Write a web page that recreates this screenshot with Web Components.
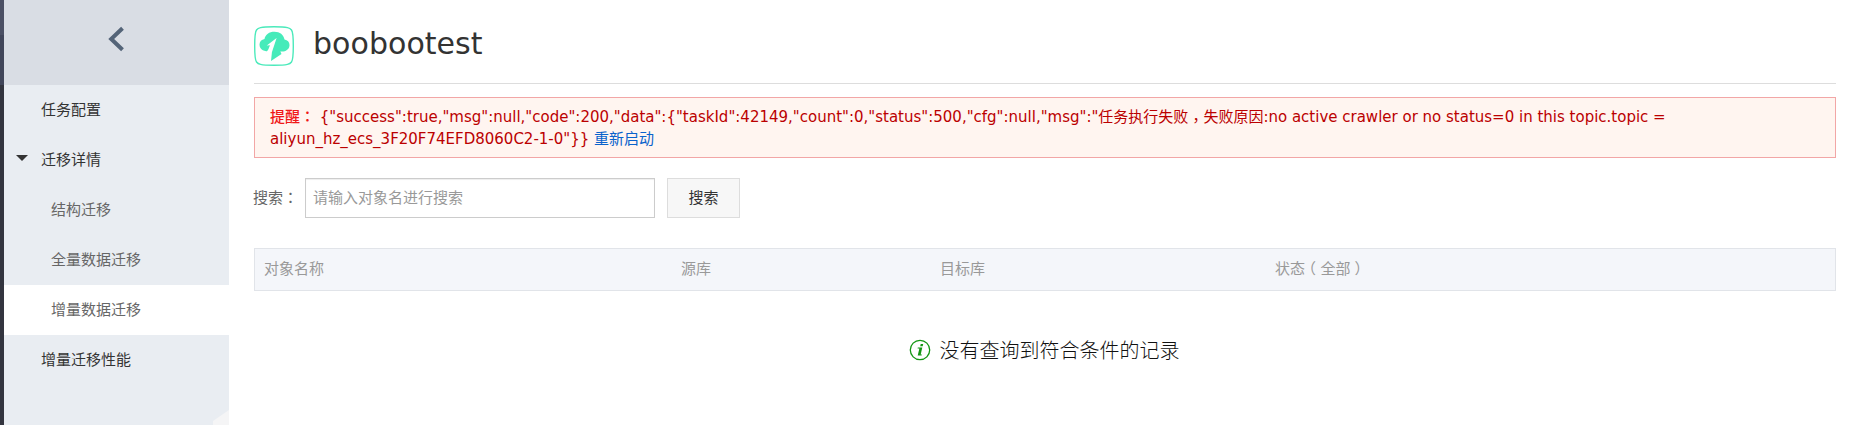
<!DOCTYPE html>
<html lang="zh-CN"><head><meta charset="utf-8"><title>boobootest</title>
<style>
html,body{margin:0;height:100%}
body{background:#fff;font-family:"DejaVu Sans","Noto Sans CJK SC",sans-serif;font-size:15px;color:#333;overflow:hidden}
</style></head><body>
<migration-app></migration-app>
<script>
const define=(name,html)=>customElements.define(name,class extends HTMLElement{
  constructor(){super();const t=document.createElement('template');t.innerHTML=html;
    this.attachShadow({mode:'open'}).append(t.content.cloneNode(true));}
});
define('nav-item',`<style>
:host{display:flex;align-items:center;height:50px;box-sizing:border-box;padding:0 0 1px 14px;color:#333;font-size:15px}
:host([sub]){color:#666}
:host([active]){background:#fff}
svg{width:12px;height:6px;margin:0 13px 4px -2px;visibility:hidden}
:host([open]) svg{visibility:visible}
:host([sub]) svg{margin-right:23px}
span{line-height:22px}
</style><svg viewBox="0 0 12 6"><path d="M0 0h12L6 6z" fill="#333"/></svg><span><slot></slot></span>`);
define('side-nav',`<style>
:host{display:flex;width:229px;height:425px;flex:none;position:relative}
.rail{width:4px;background:linear-gradient(#4b5064 35px,#41465a 35px 85px,#33353f 85px)}
.menu{flex:1;background:#e9edf2}
.back{height:85px;background:#d9dde4;display:flex;box-sizing:border-box;padding:26px 0 0 104px}
.corner{position:absolute;right:0;bottom:0;width:16px;height:15px}
svg{display:block}
</style><div class="rail"></div><div class="menu"><div class="back"><svg width="17" height="26" viewBox="0 0 17 26"><path d="M14.500 2.200L3.200 13l11.300 10.800" fill="none" stroke="#546478" stroke-width="4"/></svg></div>
<nav><nav-item>任务配置</nav-item><nav-item open>迁移详情</nav-item><nav-item sub>结构迁移</nav-item><nav-item sub>全量数据迁移</nav-item><nav-item sub active>增量数据迁移</nav-item><nav-item>增量迁移性能</nav-item></nav></div>
<svg class="corner" viewBox="0 0 16 15"><path d="M0 15V11L16 0v15z" fill="#f5f5f6"/></svg>`);
define('page-title',`<style>
:host{display:flex;height:84px;box-sizing:border-box;border-bottom:1px solid #ddd;padding-top:26px}
svg{width:40px;height:40px;flex:none}
h1{margin:0 0 0 19px;font-size:30px;line-height:36px;font-weight:400;color:#333;letter-spacing:.05px}
</style><svg viewBox="0 0 40 40"><path d="M20 .7C34 .7 36 2 37.500 4C39 6 39.300 9 39.300 20S39 34 37.500 36S34 39.300 20 39.300S4 38 2.500 36S.7 31 .7 20S1 6 2.500 4S6 .7 20 .7z" fill="#fff" stroke="#4beabb" stroke-width="1.400"/>
<path d="M18 25.500C13 26 5.500 25 5.500 18.500C5.500 15.500 7.500 13.500 10.500 13C11.500 8.500 15 5.800 20.500 5.800c5.500 0 9 3 10 7.700c3 .4 5 2.700 5 5.400c0 3.400-2.500 6-6 6.500h-3.200l1.200 2.600L17 35z" fill="#46ebba"/><path d="M22.600 12L12.800 19.500l3.200-.3-1.700 4.300-1.800 2.500h5.500z" fill="#fff"/></svg><h1><slot></slot></h1>`);
define('alert-box',`<style>
:host{display:block;height:61px;box-sizing:border-box;margin-top:13px;border:1px solid #f2a6a6;background:#fff5f0;padding:8px 15px;line-height:22px;color:#b00;font-size:15px}
b{font-weight:500;color:#f01818}
i{font:inherit;font-family:"Noto Sans CJK TC",sans-serif;line-height:0}
a{color:#0a63cc}
.l{white-space:nowrap}
</style><div class="l"><b>提醒<i lang="zh-TW">：</i></b> <slot name="first"></slot></div><div class="l"><slot name="second"></slot> <a>重新启动</a></div>`);
define('search-bar',`<style>
:host{display:flex;height:40px;margin-top:20px;align-items:center;font-size:15px}
label{width:52px;margin-left:-1px;color:#666;line-height:22px;white-space:nowrap}
i{font:inherit;font-family:"Noto Sans CJK TC",sans-serif;line-height:0}
.input{width:350px;height:40px;box-sizing:border-box;border:1px solid #ccc;padding-left:7px;line-height:38px;color:#999;box-shadow:inset 0 1px 1px rgba(0,0,0,.07)}
button{font:inherit;width:73px;height:40px;margin:0 0 0 12px;padding:0 0 3px;border:1px solid #ddd;background:#f7f7f7;color:#333}
</style><label>搜索<i lang="zh-TW">：</i></label><div class="input">请输入对象名进行搜索</div><button>搜索</button>`);
define('table-head',`<style>
:host{display:grid;grid-template-columns:417px 259px 335px 1fr;height:43px;box-sizing:border-box;margin-top:30px;border:1px solid #e1e4e9;background:#f4f6fa;padding-left:9px;line-height:40px;color:#999;font-size:15px}
</style><slot></slot>`);
define('empty-state',`<style>
:host{display:flex;justify-content:center;align-items:center;gap:9px;margin:43px 2px 0 0;height:30px;font-size:20px;font-weight:300;color:#111}
svg{width:22px;height:22px;margin-top:1px}
</style><svg viewBox="0 0 22 22"><circle cx="11" cy="11" r="9.700" fill="none" stroke="#149614" stroke-width="1.300"/><path d="M11.700 5h2.500l-.5 2.200h-2.500zM8.800 8.500h4.500l-1.600 7h1.200l-.3 1H8.700l1.700-7H8.600z" fill="#149614"/></svg><span><slot></slot></span>`);
define('migration-app',`<style>
:host{display:flex;height:425px}
main{flex:1;min-width:0;padding:0 15px 0 25px}
.comma{font-family:"Noto Sans CJK TC",sans-serif;line-height:0;vertical-align:-4px}
.open,.close{font-family:"Noto Sans CJK SC",sans-serif;font-feature-settings:"halt";line-height:0}
.open{margin:0 4.5px 0 3.5px}
.close{margin-left:4px}
</style><side-nav></side-nav><main><page-title>boobootest</page-title>
<alert-box><span slot="first">{"success":true,"msg":null,"code":200,"data":{"taskId":42149,"count":0,"status":500,"cfg":null,"msg":"任务执行失败<span class="comma" lang="zh-TW">，</span>失败原因:no active crawler or no status=0 in this topic.topic =</span><span slot="second">aliyun_hz_ecs_3F20F74EFD8060C2-1-0"}}</span></alert-box>
<search-bar></search-bar><table-head><span>对象名称</span><span>源库</span><span>目标库</span><span>状态<span class="open">（</span>全部<span class="close">）</span></span></table-head><empty-state>没有查询到符合条件的记录</empty-state></main>`);
</script></body></html>
